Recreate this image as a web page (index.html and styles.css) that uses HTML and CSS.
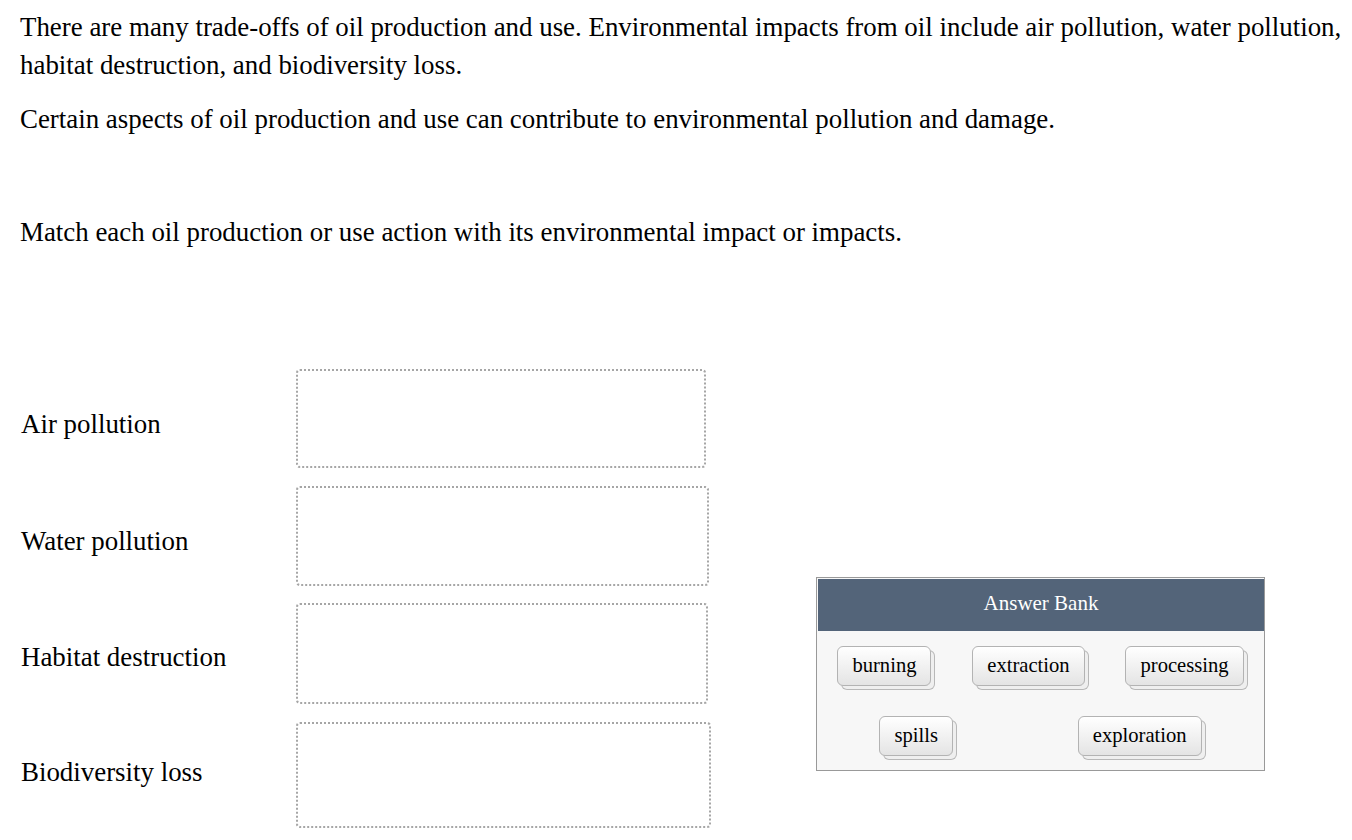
FILE: index.html
```html
<!DOCTYPE html>
<html>
<head>
<meta charset="utf-8">
<link rel="stylesheet" href="styles.css">
</head>
<body>
<div class="page">
  <p class="para">There are many trade-offs of oil production and use. Environmental impacts from oil include air pollution, water pollution, habitat destruction, and biodiversity loss.</p>
  <p class="para">Certain aspects of oil production and use can contribute to environmental pollution and damage.</p>
  <p class="para prompt">Match each oil production or use action with its environmental impact or impacts.</p>

  <div class="match">
    <div class="targets">
      <div class="row">
        <div class="label">Air pollution</div>
        <div class="drop d1"></div>
      </div>
      <div class="row">
        <div class="label">Water pollution</div>
        <div class="drop d2"></div>
      </div>
      <div class="row">
        <div class="label l3">Habitat destruction</div>
        <div class="drop d3"></div>
      </div>
      <div class="row">
        <div class="label l4">Biodiversity loss</div>
        <div class="drop d4"></div>
      </div>
    </div>

    <div class="bank">
      <div class="bank-head">Answer Bank</div>
      <div class="bank-body">
        <div class="chip">burning</div>
        <div class="chip">extraction</div>
        <div class="chip">processing</div>
        <div class="chip">spills</div>
        <div class="chip">exploration</div>
      </div>
    </div>
  </div>
</div>
</body>
</html>
```

FILE: styles.css
```css
html, body {
  margin: 0;
  padding: 0;
  background: #ffffff;
}

.page {
  padding: 8px 0 0 20px;
  font-family: "Liberation Serif", "Times New Roman", serif;
  font-size: 26.9px;
  line-height: 38px;
  color: #000;
}

.para {
  margin: 0 0 16px 0;
}

.prompt {
  margin-top: 75px;
  margin-bottom: 0;
}

.match {
  display: flex;
  margin-top: 118px;
}

.targets {
  display: flex;
  flex-direction: column;
  gap: 17.7px;
}

.row {
  display: flex;
  align-items: center;
}

.label {
  width: 275px;
  padding-left: 1px;
  padding-top: 10px;
}

.l3 {
  padding-top: 6px;
}

.l4 {
  padding-top: 0;
  padding-bottom: 6px;
}

.drop {
  box-sizing: border-box;
  border: 2px dotted #a6a6a6;
  border-radius: 4px;
}

.d1 { width: 410px; height: 99px; }
.d2 { width: 413px; height: 100px; }
.d3 { width: 412px; height: 101px; }
.d4 { width: 415px; height: 106px; }

.bank {
  margin-top: 208px;
  margin-left: 105px;
  width: 449px;
  height: 194px;
  box-sizing: border-box;
  border: 1px solid #999;
  background: #f7f7f7;
  align-self: flex-start;
}

.bank-head {
  margin: 1px 0 0 1px;
  height: 52px;
  background: #536479;
  color: #fff;
  font-size: 21px;
  line-height: 48px;
  text-align: center;
}

.bank-body {
  display: flex;
  flex-wrap: wrap;
  justify-content: space-around;
  padding: 15px 0 0 0;
  row-gap: 30px;
}

.chip {
  box-sizing: border-box;
  height: 40px;
  padding: 0 14px;
  margin: 0 10px;
  border: 1px solid #b3b3b3;
  border-radius: 6px;
  background: linear-gradient(#ffffff, #e4e4e4);
  font-size: 20.6px;
  line-height: 37px;
  box-shadow: 4px 4px 0 -1px #efefef, 4px 4px 0 0 #b8b8b8;
}
```
